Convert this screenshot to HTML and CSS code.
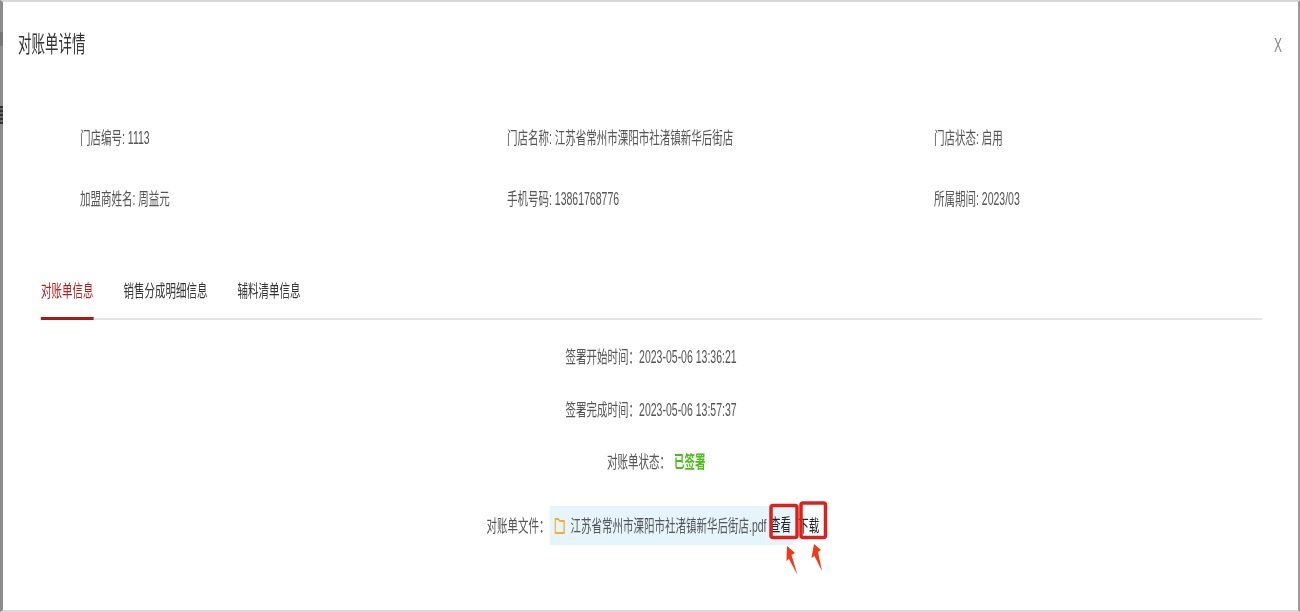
FILE: index.html
```html
<!DOCTYPE html>
<html lang="zh-CN">
<head>
<meta charset="utf-8">
<title>对账单详情</title>
<link rel="stylesheet" href="styles.css">
</head>
<body>
<div class="frame">
  <div class="stage">
    <header class="head"><h1 class="title">对账单详情</h1><span class="close">X</span></header>
    <section class="info">
      <div>门店编号: 1113</div>
      <div>门店名称: 江苏省常州市溧阳市社渚镇新华后街店</div>
      <div>门店状态: 启用</div>
      <div>加盟商姓名: 周益元</div>
      <div>手机号码: 13861768776</div>
      <div>所属期间: 2023/03</div>
    </section>
    <nav class="tabs">
      <a class="tab active">对账单信息</a>
      <a class="tab">销售分成明细信息</a>
      <a class="tab">辅料清单信息</a>
    </nav>
    <section class="rows">
      <div class="row">签署开始时间：2023-05-06 13:36:21</div>
      <div class="row">签署完成时间：2023-05-06 13:57:37</div>
      <div class="row status-row">对账单状态：<b class="ok">已签署</b></div>
      <div class="row file-row">
        <span class="file-label">对账单文件：</span>
        <span class="file">
          <svg class="folder" viewBox="0 0 14 20" preserveAspectRatio="none"><path d="M1 3h4.500l1.500 2h6v12h-12z" fill="none" stroke="#efb02e" stroke-width="1.800" stroke-linejoin="round"/></svg>
          <span class="file-name">江苏省常州市溧阳市社渚镇新华后街店.pdf</span>
        </span>
        <a class="action view">查看</a>
        <a class="action download">下载</a>
      </div>
    </section>
  </div>
  <svg class="marks" viewBox="3 2 1295 608">
    <rect x="771" y="505.500" width="26" height="32" rx="2" fill="none" stroke="#dc201c" stroke-width="3.500"/>
    <rect x="801" y="503" width="24.500" height="34.500" rx="2" fill="none" stroke="#dc201c" stroke-width="3.500"/>
    <path d="M787 546l8 7-3.500 2 6 20-8.500-16-2.500 2z" fill="#ee3a18"/>
    <path d="M814 544l7 6-3 2 4 19-7.500-15-3 2z" fill="#ee3a18"/>
  </svg>
</div>
</body>
</html>
```
FILE: styles.css
```css
* { box-sizing: border-box; }
html, body { margin: 0; height: 100%; }
body { background: #fff; overflow: hidden; position: relative; }
body::before,
body::after {
  content: "";
  position: absolute;
  left: 0;
  width: 3px;
  z-index: 1;
}
body::before { top: 32px; height: 14px; background: #777; }
body::after { top: 106px; height: 18px; background: repeating-linear-gradient(#333 0 2px, #666 2px 4px); }
.frame {
  position: relative;
  width: 1300px;
  height: 612px;
  border-style: solid;
  border-color: #d8d8d8 #9a9a9a #d8d8d8 #8c8c8c;
  border-width: 2px 2px 2px 3px;
  background: #fff;
  overflow: hidden;
}
.stage {
  width: 2158.330px;
  transform: scaleX(.6);
  transform-origin: 0 0;
  filter: blur(.35px);
  font: 17.500px/22px "Liberation Sans", "Noto Sans CJK SC", sans-serif;
  color: #555;
}
.head {
  display: flex;
  justify-content: space-between;
  align-items: center;
  height: 86px;
  padding: 0 26.700px 0 25px;
}
.title { margin: 0; font-size: 22.500px; font-weight: 400; color: #333; }
.close { font-size: 20px; color: #888; }
.info {
  display: grid;
  grid-template-columns: repeat(3, 711.670px);
  grid-auto-rows: 61px;
  align-items: center;
  padding: 19.500px 0 0 128.330px;
}
.tabs {
  display: flex;
  gap: 50px;
  margin: 30.500px 60px 0 63.330px;
  padding-top: 20px;
  border-bottom: 2px solid #e4e4e4;
  height: 59.500px;
}
.tab { color: #333; height: 37.500px; }
.active { color: #b3221d; position: relative; }
.active::after {
  content: "";
  position: absolute;
  left: 0;
  right: 0;
  bottom: -2px;
  height: 3px;
  background: #a81c18;
}
.rows { display: flex; flex-direction: column; gap: 12.500px; padding-top: 17.500px; }
.row { display: flex; justify-content: center; align-items: center; height: 40px; padding-left: 2px; white-space: pre; }
.status-row { padding-left: 19.300px; }
.ok { color: #4cbc18; font-weight: 700; margin-left: 6.670px; }
.file-row { height: 39px; margin-top: 11.500px; padding-left: 8px; }
.file {
  display: flex;
  align-items: center;
  height: 39px;
  padding-left: 8.330px;
  background: #e6f5fc;
}
.folder { width: 17.500px; height: 20px; margin-right: 9.170px; }
.file-name { color: #555; }
.action { color: #222; }
.view {
  height: 39px;
  width: 45px;
  padding-left: 6px;
  line-height: 39px;
  background: #e6f5fc;
}
.download { margin-left: 8px; }
.marks { position: absolute; left: 0; top: 0; width: 1295px; height: 608px; pointer-events: none; }
```
